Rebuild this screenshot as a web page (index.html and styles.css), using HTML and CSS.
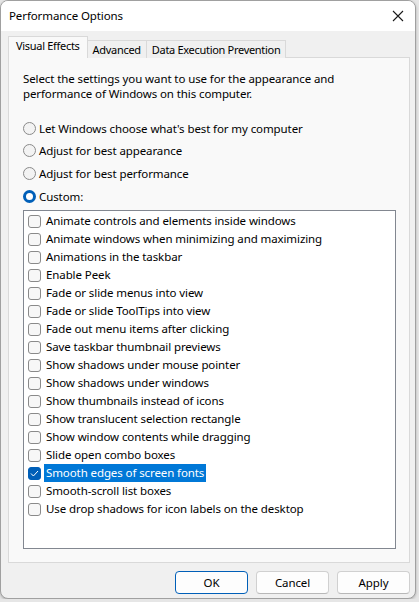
FILE: index.html
```html
<!DOCTYPE html>
<html>
<head>
<meta charset="utf-8">
<link rel="stylesheet" href="styles.css">
</head>
<body>
<div class="window">
  <div class="titlebar">
    <span class="title">Performance Options</span>
    <span class="close"><svg width="12" height="12" viewBox="0 0 12 12"><path d="M1 1 L11 11 M11 1 L1 11" stroke="#1a1a1a" stroke-width="1.1" fill="none"/></svg></span>
  </div>
  <div class="client">
    <div class="tabs">
      <div class="tab active">Visual Effects</div>
      <div class="tab">Advanced</div>
      <div class="tab">Data Execution Prevention</div>
    </div>
    <div class="panel">
      <p class="intro">Select the settings you want to use for the appearance and performance of Windows on this computer.</p>
      <div class="radios">
        <div class="radio"><span class="rdot"></span><span>Let Windows choose what's best for my computer</span></div>
        <div class="radio"><span class="rdot"></span><span>Adjust for best appearance</span></div>
        <div class="radio"><span class="rdot"></span><span>Adjust for best performance</span></div>
        <div class="radio"><span class="rdot on"></span><span>Custom:</span></div>
      </div>
      <div class="listbox">
        <div class="item"><span class="cb"></span><span class="lbl">Animate controls and elements inside windows</span></div>
        <div class="item"><span class="cb"></span><span class="lbl">Animate windows when minimizing and maximizing</span></div>
        <div class="item"><span class="cb"></span><span class="lbl">Animations in the taskbar</span></div>
        <div class="item"><span class="cb"></span><span class="lbl">Enable Peek</span></div>
        <div class="item"><span class="cb"></span><span class="lbl">Fade or slide menus into view</span></div>
        <div class="item"><span class="cb"></span><span class="lbl">Fade or slide ToolTips into view</span></div>
        <div class="item"><span class="cb"></span><span class="lbl">Fade out menu items after clicking</span></div>
        <div class="item"><span class="cb"></span><span class="lbl">Save taskbar thumbnail previews</span></div>
        <div class="item"><span class="cb"></span><span class="lbl">Show shadows under mouse pointer</span></div>
        <div class="item"><span class="cb"></span><span class="lbl">Show shadows under windows</span></div>
        <div class="item"><span class="cb"></span><span class="lbl">Show thumbnails instead of icons</span></div>
        <div class="item"><span class="cb"></span><span class="lbl">Show translucent selection rectangle</span></div>
        <div class="item"><span class="cb"></span><span class="lbl">Show window contents while dragging</span></div>
        <div class="item"><span class="cb"></span><span class="lbl">Slide open combo boxes</span></div>
        <div class="item"><span class="cb checked"><svg width="9" height="7" viewBox="0 0 9 7"><path d="M1 3.5 L3.4 6 L8 1" stroke="#ffffff" stroke-width="1" fill="none"/></svg></span><span class="lbl sel">Smooth edges of screen fonts</span></div>
        <div class="item"><span class="cb"></span><span class="lbl">Smooth-scroll list boxes</span></div>
        <div class="item"><span class="cb"></span><span class="lbl">Use drop shadows for icon labels on the desktop</span></div>
      </div>
    </div>
    <div class="buttons">
      <div class="btn default">OK</div>
      <div class="btn">Cancel</div>
      <div class="btn">Apply</div>
    </div>
  </div>
</div>
</body>
</html>
```
FILE: styles.css
```css
html, body {
  margin: 0;
  padding: 0;
  background: #e6e6e6;
}
body {
  font-family: "Noto Sans", "Open Sans", sans-serif;
  font-size: 11.5px;
  letter-spacing: -0.1px;
  color: #000;
}
.window {
  width: 414px;
  height: 597px;
  border: 1px solid #a0a0a0;
  border-radius: 8px;
  overflow: hidden;
  background: #f0f0f0;
  display: flex;
  flex-direction: column;
  box-shadow: 0 1px 3px rgba(0,0,0,0.25);
}
.titlebar {
  height: 30px;
  background: #ffffff;
  display: flex;
  align-items: center;
  justify-content: space-between;
  padding: 0 9px 0 8px;
  flex: none;
}
.title {
  font-size: 11.5px;
  line-height: 16px;
}
.close {
  display: flex;
  width: 12px;
  height: 12px;
  margin-right: 2px;
}
.client {
  flex: 1;
  display: flex;
  flex-direction: column;
  padding: 6px 6px 0 7px;
}
.tabs {
  display: flex;
  align-items: flex-end;
  height: 21px;
  position: relative;
  z-index: 1;
  margin-bottom: -1px;
}
.tab {
  height: 18px;
  line-height: 17px;
  padding: 0 5px;
  font-size: 11px;
  letter-spacing: -0.3px;
  background: #f0f0f0;
  border: 1px solid #d9d9d9;
  border-bottom: none;
  box-sizing: border-box;
  margin-left: -1px;
  white-space: nowrap;
}
.tab.active {
  height: 22px;
  line-height: 18px;
  background: #f9f9f9;
  padding: 0 7px;
  margin-left: 0;
  margin-right: 0;
  z-index: 2;
}
.panel {
  width: 402px;
  height: 506px;
  box-sizing: border-box;
  border: 1px solid #d9d9d9;
  background: #f9f9f9;
  padding: 13px 13px 0 14px;
  flex: none;
}
.intro {
  margin: 0;
  line-height: 15px;
  width: 370px;
}
.radios {
  margin-top: 16px;
  display: flex;
  flex-direction: column;
  gap: 0;
}
.radio {
  display: flex;
  align-items: center;
  height: 22.6px;
  gap: 3px;
}
.rdot {
  width: 11px;
  height: 11px;
  border: 1px solid #8a8a8a;
  border-radius: 50%;
  background: #f3f3f3;
  flex: none;
}
.rdot.on {
  width: 7px;
  height: 7px;
  border: 3px solid #005fb8;
  background: #ffffff;
}
.listbox {
  margin-top: 3px;
  height: 339px;
  box-sizing: border-box;
  border: 1px solid #828790;
  background: #ffffff;
  padding-top: 1px;
  padding-left: 4px;
}
.item {
  height: 18px;
  display: flex;
  align-items: center;
}
.cb {
  width: 11px;
  height: 11px;
  border: 1px solid #8a8a8a;
  border-radius: 3px;
  background: #f7f7f7;
  flex: none;
  display: flex;
  align-items: center;
  justify-content: center;
}
.cb.checked {
  background: #005fb8;
  border-color: #005fb8;
}
.lbl {
  margin-left: 3px;
  padding: 0 2px 0 2px;
  line-height: 18px;
  white-space: nowrap;
}
.lbl.sel {
  background: #0078d7;
  color: #ffffff;
}
.buttons {
  display: flex;
  justify-content: flex-end;
  gap: 8px;
  padding: 8px 0 0 0;
  margin-right: -1px;
}
.btn {
  width: 71px;
  height: 21px;
  line-height: 21px;
  border: 1px solid #d0d0d0;
  border-bottom-color: #b8b8b8;
  border-radius: 4px;
  background: #fdfdfd;
  text-align: center;
}
.btn.default {
  border: 1px solid #005fb8;
}
```
